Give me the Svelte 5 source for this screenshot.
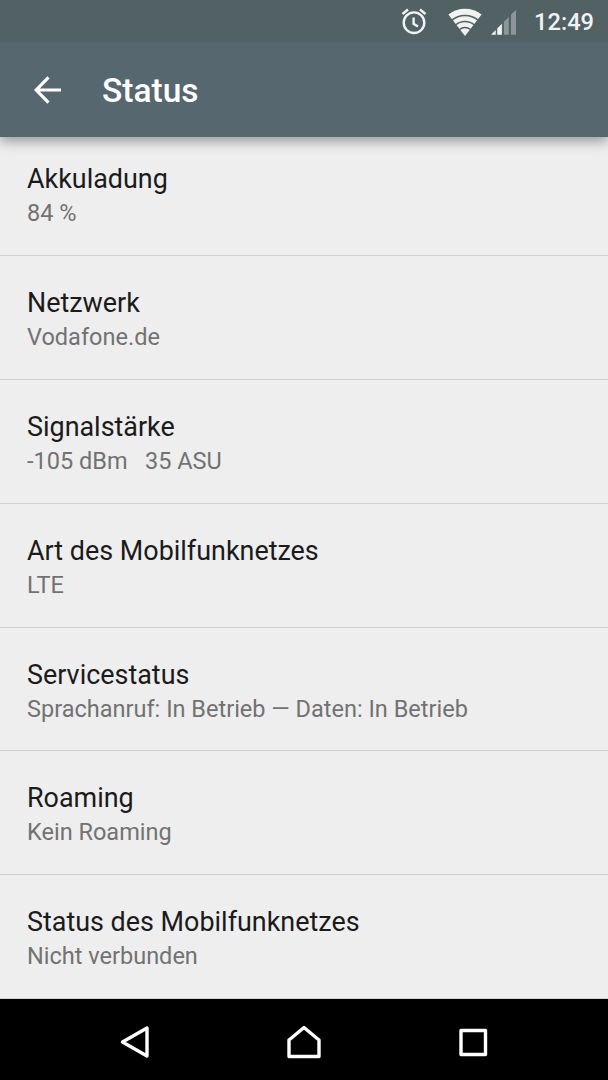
<script>
  const entries = [
    { title: 'Akkuladung', summary: '84 %' },
    { title: 'Netzwerk', summary: 'Vodafone.de' },
    { title: 'Signalstärke', summary: '-105 dBm   35 ASU' },
    { title: 'Art des Mobilfunknetzes', summary: 'LTE' },
    { title: 'Servicestatus', summary: 'Sprachanruf: In Betrieb — Daten: In Betrieb' },
    { title: 'Roaming', summary: 'Kein Roaming' },
    { title: 'Status des Mobilfunknetzes', summary: 'Nicht verbunden' },
  ];
</script>

<div class="screen">
  <div class="status-bar">
    <svg class="alarm" width="28" height="28" viewBox="0 0 28 28">
      <circle cx="14" cy="14.7" r="10.3" />
      <path d="M2.500 6 8 1.500M25.500 6 20 1.500" />
      <path d="M13.600 9.500v6.300l4.400 2.700" />
    </svg>
    <svg class="wifi" width="34" height="28" viewBox="0 0 34 28">
      <path class="fan" d="M17 28 .4 6.500A27.200 27.200 0 0 1 33.600 6.500Z" />
      <path class="gap" d="M3.700 12.400a20.500 20.500 0 0 1 26.600 0M7.600 17a14.500 14.500 0 0 1 18.800 0M11.500 21.500a8.500 8.500 0 0 1 11 0" />
    </svg>
    <svg class="signal" width="26" height="26" viewBox="0 0 26 26">
      <path class="on" d="M0 25.700 4.700 21v4.700ZM6.200 19.500l4.700-4.700v10.900H6.200Z" />
      <path class="off" d="M12.900 12.800l4.900-4.900v17.800h-4.900ZM20 5.700l5-5v25h-5Z" />
    </svg>
    <span class="clock">12:49</span>
  </div>

  <header class="toolbar">
    <button class="back" aria-label="Zurück">
      <svg width="28" height="28" viewBox="0 0 28 28">
        <path d="M14.500 1.400 2.200 14l12.300 12.600M2.200 14H27" />
      </svg>
    </button>
    <h1>Status</h1>
  </header>

  <main>
    {#each entries as entry}
      <section class="entry">
        <h2>{entry.title}</h2>
        <p>{entry.summary}</p>
      </section>
    {/each}
  </main>

  <nav>
    <button aria-label="Zurück">
      <svg width="34" height="34" viewBox="0 0 34 34">
        <path d="M29 3v28L4.500 17Z" />
      </svg>
    </button>
    <button aria-label="Startseite">
      <svg width="34" height="34" viewBox="0 0 34 34">
        <path d="M2 31.500V15L17 2.500 32 15v16.500Z" />
      </svg>
    </button>
    <button aria-label="Übersicht">
      <svg width="34" height="34" viewBox="0 0 34 34">
        <path d="M5 5.500h24.500v24H5Z" />
      </svg>
    </button>
  </nav>
</div>

<style>
  :global(body) {
    margin: 0;
  }

  .screen {
    display: flex;
    flex-direction: column;
    width: 608px;
    height: 1080px;
    overflow: hidden;
    background: #eee;
    font-family: Roboto, sans-serif;
  }

  h1, h2, p {
    margin: 0;
  }

  button {
    display: flex;
    padding: 0;
    border: 0;
    background: none;
  }

  svg {
    display: block;
    fill: none;
  }

  .status-bar {
    position: relative;
    z-index: 2;
    display: flex;
    flex: none;
    align-items: flex-start;
    justify-content: flex-end;
    box-sizing: border-box;
    height: 42px;
    padding: 8px 14px 0 0;
    background: #516164;
    color: #f1f3f3;
  }

  .alarm {
    margin-right: 20px;
    stroke: #f1f3f3;
    stroke-width: 2.4;
  }

  .wifi {
    margin-right: 9px;
  }

  .fan, .on {
    fill: #f1f3f3;
  }

  .gap {
    stroke: #516164;
    stroke-width: 1.5;
  }

  .signal {
    margin: 1px 17px 0 0;
  }

  .off {
    fill: #8d9698;
  }

  .clock {
    font-size: 23.64px;
    font-weight: 500;
    line-height: 28px;
  }

  .toolbar {
    position: relative;
    z-index: 1;
    display: flex;
    flex: none;
    align-items: center;
    box-sizing: border-box;
    height: 95px;
    padding-left: 34px;
    background: #56676f;
    color: #fff;
    box-shadow: 0 4px 12px rgba(0, 0, 0, 0.38);
  }

  .toolbar h1 {
    margin: 3px 0 0 40px;
    font-size: 33.5px;
    font-weight: 500;
    line-height: 40px;
  }

  .back svg {
    stroke: #fff;
    stroke-width: 3.2;
  }

  main {
    display: flex;
    flex: 1;
    flex-direction: column;
    justify-content: flex-end;
    min-height: 0;
  }

  .entry {
    flex: none;
    box-sizing: border-box;
    height: 123.8px;
    padding: 29px 27px 0;
    border-bottom: 1px solid #d0d0d0;
  }

  .entry h2 {
    color: #1b1b1b;
    font-size: 26.92px;
    font-weight: 400;
    line-height: 36px;
  }

  .entry p {
    color: #727272;
    font-size: 23.53px;
    line-height: 32px;
    white-space: pre;
  }

  nav {
    display: flex;
    flex: none;
    align-items: center;
    justify-content: center;
    gap: 135px;
    box-sizing: border-box;
    height: 81px;
    padding-top: 5px;
    background: #000;
  }

  nav svg {
    stroke: #fff;
    stroke-width: 3.4;
    stroke-linejoin: round;
  }
</style>
